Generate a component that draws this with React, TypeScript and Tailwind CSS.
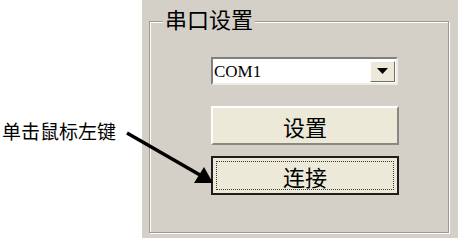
import React from "react";

const cjk = { fontFamily: '"Noto Sans CJK SC", "Noto Sans", sans-serif' };

export default function App() {
  return (
    <div className="relative flex w-[460px] h-[247px] bg-white overflow-hidden" style={cjk}>
      {/* left hint text */}
      <div className="w-[142px] shrink-0 pt-[119px] pl-[2px]">
        <span className="text-[19px] leading-[24px] text-black whitespace-nowrap">单击鼠标左键</span>
      </div>

      {/* dialog panel */}
      <div className="w-[316px] h-[238px] bg-[#d4d0c8] pl-[7px] pr-[9px] pt-[21px] pb-[5px]">
        <div className="relative h-full border border-[#9d9a92] shadow-[inset_1px_1px_0_#fff,1px_1px_0_#fff]">
          <span className="absolute left-[13px] top-[-17px] px-[2px] bg-[#d4d0c8] text-[22px] leading-[26px] text-black">
            串口设置
          </span>

          <div className="flex flex-col pl-[61px] pt-[35px] gap-[21px]">
            {/* combo box */}
            <div className="flex items-center w-[187px] h-[28px] bg-white border-2 border-t-[#808080] border-l-[#808080] border-r-[#ecebe6] border-b-[#ecebe6]">
              <span
                className="flex-1 pl-[1px] text-[17px] leading-none text-black"
                style={{ fontFamily: '"Liberation Serif", serif' }}
              >
                COM1
              </span>
              <div className="flex items-center justify-center w-[25px] h-[21px] mr-[1px] bg-[#ece9d8] border border-t-white border-l-white border-r-[#716f64] border-b-[#716f64]">
                <svg width="11" height="6" viewBox="0 0 11 6">
                  <path d="M0 0 H11 L5.5 6 Z" fill="#000" />
                </svg>
              </div>
            </div>

            <div className="flex flex-col gap-[11px]">
              <button
                type="button"
                className="w-[188px] h-[39px] bg-[#ece9d8] border-2 border-t-white border-l-white border-r-[#8a8880] border-b-[#8a8880] text-[22px] leading-none text-black"
              >
                设置
              </button>
              <button
                type="button"
                className="w-[188px] h-[39px] bg-[#ece9d8] border-2 border-[#1e1e1e] p-[3px] text-[22px] leading-none text-black"
              >
                <div className="flex items-center justify-center w-full h-full border border-dotted border-[#3a3a3a]">
                  连接
                </div>
              </button>
            </div>
          </div>
        </div>
      </div>

      {/* pointing arrow */}
      <svg className="absolute left-0 top-0 pointer-events-none" width="460" height="247">
        <line x1="127" y1="133" x2="200" y2="175" stroke="#000" strokeWidth="3.5" />
        <path d="M213 183 L194 183 L204 167 Z" fill="#000" />
      </svg>
    </div>
  );
}
